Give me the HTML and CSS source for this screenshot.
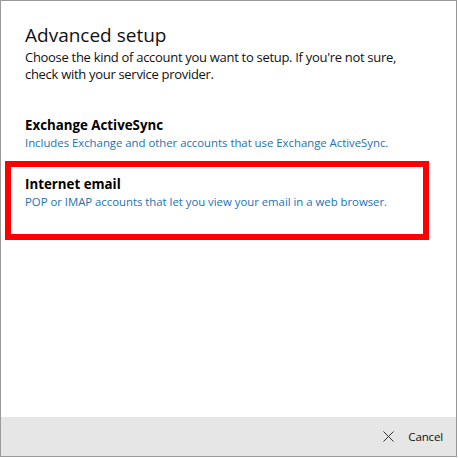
FILE: index.html
```html
<!DOCTYPE html>
<html>
<head>
<meta charset="utf-8">
<link rel="stylesheet" href="styles.css">
</head>
<body>
<div class="window">
  <div class="content">
    <h1 class="title">Advanced setup</h1>
    <p class="intro">Choose the kind of account you want to setup. If you're not sure, check with your service provider.</p>
    <div class="options">
      <div class="option">
        <div class="option-title">Exchange ActiveSync</div>
        <div class="option-desc">Includes Exchange and other accounts that use Exchange ActiveSync.</div>
      </div>
      <div class="option selected">
        <div class="option-title">Internet email</div>
        <div class="option-desc">POP or IMAP accounts that let you view your email in a web browser.</div>
      </div>
    </div>
  </div>
  <div class="footer">
    <div class="cancel">
      <svg class="cancel-icon" width="11" height="11" viewBox="0 0 11 11"><path d="M0.5 0.5 L10.5 10.5 M10.5 0.5 L0.5 10.5" stroke="#333" stroke-width="1" fill="none"/></svg>
      <span class="cancel-text">Cancel</span>
    </div>
  </div>
</div>
</body>
</html>
```
FILE: styles.css
```css
html, body {
  margin: 0;
  padding: 0;
  background: #fff;
}
body {
  font-family: "Open Sans", "Noto Sans", sans-serif;
  color: #000;
}
.window {
  width: 457px;
  height: 457px;
  box-sizing: border-box;
  border: 1px solid #9a9a9a;
  display: flex;
  flex-direction: column;
}
.content {
  flex: 1;
  padding: 0 0 0 4px;
}
.title {
  margin: 21px 0 0 20px;
  font-size: 19px;
  font-weight: 400;
  line-height: 27px;
  color: #111;
}
.intro {
  margin: 0 0 0 20px;
  width: 400px;
  font-size: 13px;
  letter-spacing: -0.3px;
  line-height: 17px;
  color: #111;
}
.options {
  margin-top: 25px;
  width: 412px;
  margin-left: 6px;
}
.option {
  padding: 8px 14px 16px;
}
.option.selected {
  outline: 6px solid #ff0000;
  padding-bottom: 24px;
}
.option-title {
  font-size: 13.3px;
  font-weight: 700;
  line-height: 18px;
}
.option-desc {
  font-size: 11.4px;
  letter-spacing: -0.03px;
  line-height: 17px;
  white-space: nowrap;
  color: #2272b4;
}
.footer {
  height: 39px;
  background: #e6e6e6;
  display: flex;
  justify-content: flex-end;
  align-items: center;
  padding-right: 13px;
}
.cancel {
  display: flex;
  align-items: center;
  gap: 14px;
}
.cancel-icon {
  display: block;
}
.cancel-text {
  font-size: 11.6px;
  letter-spacing: -0.2px;
  color: #111;
}
```
